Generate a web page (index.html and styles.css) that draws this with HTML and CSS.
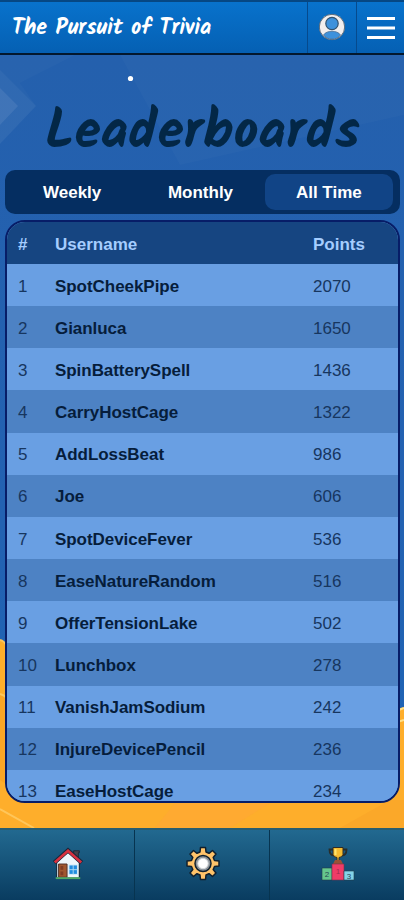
FILE: index.html
```
<!DOCTYPE html>
<html lang="en">
  <head>
    <meta charset="utf-8">
    <meta name="viewport" content="width=device-width, initial-scale=1">
    <title>The Pursuit of Trivia</title>
    <link rel="stylesheet" href="styles.css">
  </head>
  <body>
    <header class="topbar">
      <div class="brand">The Pursuit of Trivia</div>
      <button class="top-button" aria-label="Profile">
        <svg width="28" height="28" viewBox="0 0 28 28">
          <circle cx="14" cy="14" r="12.7" fill="#f1eeee" stroke="#596a7b" stroke-width="1"/>
          <path d="M5.500 22c3-5 14-5 17 0-4 5.500-13 5.500-17 0z" fill="#3d91dc" stroke="#4a6f94" stroke-width=".8"/>
          <circle cx="14" cy="10.500" r="6.2" fill="#3d91dc" stroke="#31526f" stroke-width="1.2"/>
        </svg>
      </button>
      <button class="top-button menu-button" aria-label="Menu">
        <svg width="28" height="24" viewBox="0 0 28 24">
          <path d="M0 2.5h28M0 12h28M0 21.5h28" stroke="#fff" stroke-width="3.2"/>
        </svg>
      </button>
    </header>

    <main class="page">
      <svg class="backdrop" viewBox="0 0 404 773" aria-hidden="true">
        <path d="M0 0h75L20 28 36 51 0 89zM120 0h284v60L180 110z" fill="#fff" opacity=".02"/>
        <path d="M0 15L36 51 0 89z" fill="#fff" opacity=".04"/>
        <path d="M0 33l18 18L0 70z" fill="#fff" opacity=".08"/>
        <circle cx="130.5" cy="23.5" r="2.6" fill="#fff"/>
        <path d="M0 585q6 3 10 12l180 120 200-57q4-6 14-8v121H0z" fill="#feae2b"/>
        <path d="M0 640q3 1 6 3v86l-6-4z" fill="#fba625"/>
        <path d="M0 585q4 1 7 6M0 639q4 1 7 4M0 754l34 19" stroke="#ffc65a" stroke-width="2" fill="none"/>
        <path d="M404 653l-10 4M404 665l-10 3" stroke="#ffe08a" stroke-width="2"/>
        <path d="M175 748h95l-40 25h-75z" fill="#ffa638" opacity=".5"/>
        <path d="M390 745l-50 28h64v-28z" fill="#f9a328" opacity=".6"/>
      </svg>
      <h1 class="title">Leaderboards</h1>
      <nav class="tabs">
        <a class="tab">Weekly</a>
        <a class="tab">Monthly</a>
        <a class="tab active">All Time</a>
      </nav>
      <div class="board">
        <table>
          <thead>
            <tr><th class="rank">#</th><th class="name">Username</th><th class="points">Points</th></tr>
          </thead>
          <tbody>
            <tr><td>1</td><td class="name">SpotCheekPipe</td><td>2070</td></tr>
            <tr><td>2</td><td class="name">Gianluca</td><td>1650</td></tr>
            <tr><td>3</td><td class="name">SpinBatterySpell</td><td>1436</td></tr>
            <tr><td>4</td><td class="name">CarryHostCage</td><td>1322</td></tr>
            <tr><td>5</td><td class="name">AddLossBeat</td><td>986</td></tr>
            <tr><td>6</td><td class="name">Joe</td><td>606</td></tr>
            <tr><td>7</td><td class="name">SpotDeviceFever</td><td>536</td></tr>
            <tr><td>8</td><td class="name">EaseNatureRandom</td><td>516</td></tr>
            <tr><td>9</td><td class="name">OfferTensionLake</td><td>502</td></tr>
            <tr><td>10</td><td class="name">Lunchbox</td><td>278</td></tr>
            <tr><td>11</td><td class="name">VanishJamSodium</td><td>242</td></tr>
            <tr><td>12</td><td class="name">InjureDevicePencil</td><td>236</td></tr>
            <tr><td>13</td><td class="name">EaseHostCage</td><td>234</td></tr>
          </tbody>
        </table>
      </div>
    </main>

    <footer class="bottombar">
      <a class="bottom-link" aria-label="Home">
        <svg width="34" height="36" viewBox="0 0 36 36">
          <path d="M24 4h6v2h-1v9l-5-4z" fill="#46434d" stroke="#1c2837" stroke-width="1"/>
          <path d="M6 16L18 5l12 11v17H6z" fill="#eef6fb" stroke="#10283b" stroke-width="1.2"/>
          <path d="M3.5 16.5L18 3.5l14.500 13" fill="none" stroke="#17293d" stroke-width="4.500"/>
          <path d="M4 16.500L18 4l14 12.500" fill="none" stroke="#d8303f" stroke-width="2.800"/>
          <path d="M8 18h9v14H8z" fill="#a1572f" stroke="#4f3028"/>
          <path d="M10 20h3v4h-3zM10 26h3v4h-3z" fill="#7f3d24"/>
          <path d="M19 19h9v10h-9z" fill="#218de0" stroke="#dceffa"/>
          <path d="M23.500 19v10M19 24h9" stroke="#a9daf5" stroke-width="1"/>
          <path d="M5 33h26" stroke="#4eaa67" stroke-width="2"/>
        </svg>
      </a>
      <a class="bottom-link" aria-label="Settings">
        <svg width="36" height="36" viewBox="0 0 36 36">
          <g fill="#ffc36a" stroke="#10202e" stroke-width="1.500" stroke-linejoin="round">
            <path d="M15 6l.5-4.500h5L21 6l3 1.300 3.500-2.800 3.500 3.500-2.800 3.500 1.300 3 4.500.5v5l-4.500.5-1.300 3L31 27l-3.500 3.500-3.500-2.800-3 1.300-.5 4.500h-5L15 29l-3-1.300-3.500 2.800L5 27l2.800-3.500-1.300-3L2 20v-5l4.500-.5 1.300-3L5 8l3.500-3.500L12 7.300z"/>
            <circle cx="18" cy="17.500" r="8" fill="#8b9299"/>
          </g>
          <circle cx="18" cy="17.500" r="5.200" fill="#fff" stroke="#d5d8da"/>
        </svg>
      </a>
      <a class="bottom-link" aria-label="Leaderboards">
        <svg width="36" height="36" viewBox="0 0 36 36">
          <path d="M13 3.500H9.500q0 6 5 6M23 3.500h3.500q0 6-5 6" fill="none" stroke="#292e2b" stroke-width="1.800"/>
          <path d="M13 1.500h10v7q-1 3-4 3v4h-2v-4q-3 0-4-3z" fill="#f6bd31" stroke="#302d26"/>
          <path d="M15.500 3v6" stroke="#ffe46f" stroke-width="2"/>
          <path d="M15 14h6l2 4H13z" fill="#9a5135"/>
          <path d="M2 22h10v12H2z" fill="#65c78d" stroke="#243e46" stroke-width=".6"/>
          <path d="M12 18h12v16H12z" fill="#ef3c67" stroke="#75304c" stroke-width=".6"/>
          <path d="M24 25h10v9H24z" fill="#83d3e8" stroke="#243e46" stroke-width=".6"/>
          <text class="podium-number" x="7" y="31">2</text>
          <text class="podium-number first" x="18" y="28">1</text>
          <text class="podium-number" x="29" y="33">3</text>
        </svg>
      </a>
    </footer>
  </body>
</html>
```
FILE: styles.css
```
* { box-sizing: border-box; }
body { margin: 0; height: 900px; display: flex; flex-direction: column; overflow: hidden; font-family: "Liberation Sans", Arial, sans-serif; background: #2460ad; }

.topbar { height: 55px; flex: none; display: flex; border-top: 2px solid #064783; border-bottom: 2px solid #03182e; background: linear-gradient(#0872cc, #0560b3); }
.brand { flex: 1; padding: 2px 0 0 12px; font: bold 22px/50px Kalam, cursive; color: #fff; white-space: nowrap; }
.top-button { width: 49px; padding: 0 0 2px; border: 0; border-left: 1.5px solid #064a8d; background: none; display: flex; align-items: center; justify-content: center; }
.menu-button { width: 48px; padding: 0; }

.page { position: relative; height: 773px; flex: none; padding: 0 4px 0 5px; background: linear-gradient(#2460ad, #2362b2 60%, #1d63b4); }
.backdrop { position: absolute; top: 0; left: 0; width: 404px; height: 773px; }
.title { position: relative; margin: 0; height: 115px; padding-top: 46px; text-align: center; font: bold 54px/66px Kalam, cursive; color: #032746; }

.tabs { position: relative; height: 44px; padding: 4px 7px 4px 3px; display: flex; border-radius: 10px; background: #052e61; }
.tab { flex: 1; display: flex; align-items: center; justify-content: center; padding-top: 2px; border-radius: 10px; color: #fff; font-size: 17px; font-weight: bold; }
.tab.active { background: #114486; }

.board { position: relative; height: 583px; margin-top: 6px; overflow: hidden; border: 2.5px solid #071d67; border-radius: 20px; background: #699fe3; }
table { width: 100%; table-layout: fixed; border-collapse: collapse; font-size: 17px; }
th, td { height: 42.17px; padding: 3px 0 0 11px; text-align: left; }
th { height: 42px; background: #164581; color: #a5cdff; }
td { color: #17365f; }
.rank { width: 37px; }
.points { width: 96px; }
th.name, td.name { padding-left: 11px; }
td.name { font-weight: bold; color: #061d3b; letter-spacing: -0.05px; }
tbody tr { background: #699fe3; }
tbody tr:nth-child(even) { background: #4d82c4; }

.bottombar { height: 72px; flex: none; display: flex; border-top: 2px solid #285d70; background: linear-gradient(#226990, #093c60); }
.bottom-link { flex: 1; display: flex; align-items: center; justify-content: center; padding: 0 0 3px 2px; }
.bottom-link + .bottom-link { border-left: 1px solid #073450; }
.podium-number { font-size: 8px; text-anchor: middle; fill: #284653; }
.podium-number.first { fill: #a52c50; }
```
